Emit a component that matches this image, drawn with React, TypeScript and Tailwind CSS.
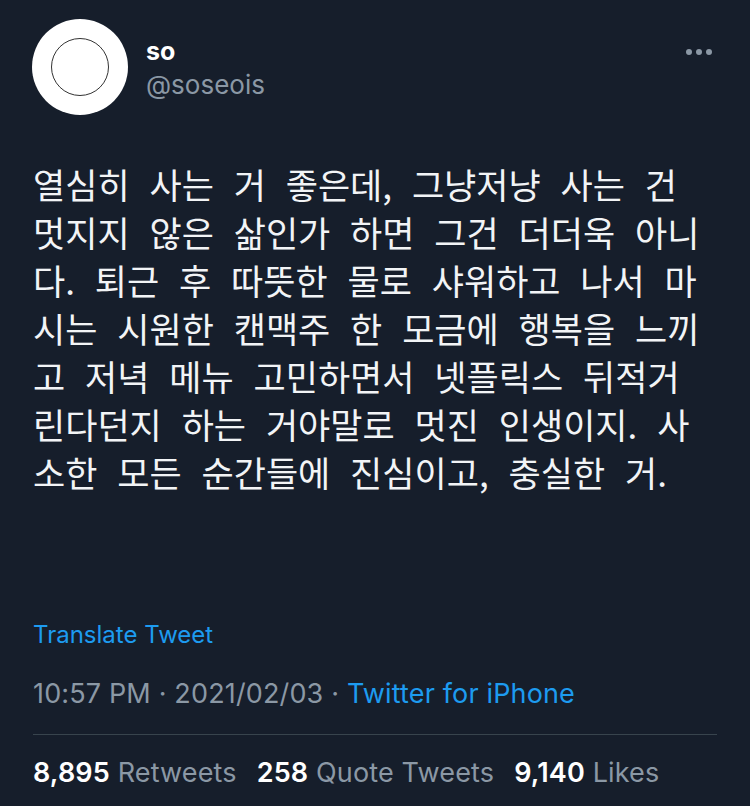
import * as React from 'react';

const lines = [
  '열심히 사는 거 좋은데, 그냥저냥 사는 건',
  '멋지지 않은 삶인가 하면 그건 더더욱 아니',
  '다. 퇴근 후 따뜻한 물로 샤워하고 나서 마',
  '시는 시원한 캔맥주 한 모금에 행복을 느끼',
  '고 저녁 메뉴 고민하면서 넷플릭스 뒤적거',
  '린다던지 하는 거야말로 멋진 인생이지. 사',
  '소한 모든 순간들에 진심이고, 충실한 거.',
];

const App: React.FC = () => {
  return (
    <div
      className="h-[806px] w-[750px] overflow-hidden bg-[#161e2b] text-white"
      style={{ fontFamily: 'Inter, "Noto Sans CJK KR", sans-serif' }}
    >
      {/* header */}
      <div className="flex items-start px-[32px] pt-[19px]">
        <div className="flex h-[96px] w-[96px] items-center justify-center rounded-full bg-white">
          <div className="h-[58px] w-[58px] rounded-full border border-[#333]" />
        </div>
        <div className="ml-[18px] flex flex-col pt-[17px]">
          <span className="text-[25px] leading-[30px] font-bold">so</span>
          <span className="mt-[2px] text-[26px] leading-[34px] text-[#8b98a5]">@soseois</span>
        </div>
        <div className="ml-auto flex gap-[4px] pt-[30px] pr-[6px]">
          <span className="h-[6px] w-[6px] rounded-full bg-[#8b98a5]" />
          <span className="h-[6px] w-[6px] rounded-full bg-[#8b98a5]" />
          <span className="h-[6px] w-[6px] rounded-full bg-[#8b98a5]" />
        </div>
      </div>

      {/* body */}
      <div
        className="mt-[45px] px-[33px] text-[35px] leading-[48px] whitespace-nowrap text-[#f2f4f6] [word-spacing:12px]"
        style={{ fontFamily: '"Noto Sans CJK KR", sans-serif' }}
      >
        {lines.map(l => (
          <div key={l}>{l}</div>
        ))}
      </div>

      <div className="mt-[124px] px-[33px] text-[24px] leading-[30px] text-[#1d9bf0]">Translate Tweet</div>

      <div className="mt-[28px] px-[33px] text-[27px] leading-[32px] tracking-[0.15px] text-[#8b98a5]">
        10:57 PM · 2021/02/03 · <span className="text-[#1d9bf0]">Twitter for iPhone</span>
      </div>

      <div className="mx-[33px] mt-[24px] h-px bg-[#38444d]" />

      <div className="mt-[22px] flex gap-[20px] px-[33px] text-[27px] leading-[32px] tracking-[0.15px]">
        <span>
          <span className="font-semibold text-white">8,895</span> <span className="text-[#8b98a5]">Retweets</span>
        </span>
        <span>
          <span className="font-semibold text-white">258</span> <span className="text-[#8b98a5]">Quote Tweets</span>
        </span>
        <span>
          <span className="font-semibold text-white">9,140</span> <span className="text-[#8b98a5]">Likes</span>
        </span>
      </div>
    </div>
  );
};

export default App;
